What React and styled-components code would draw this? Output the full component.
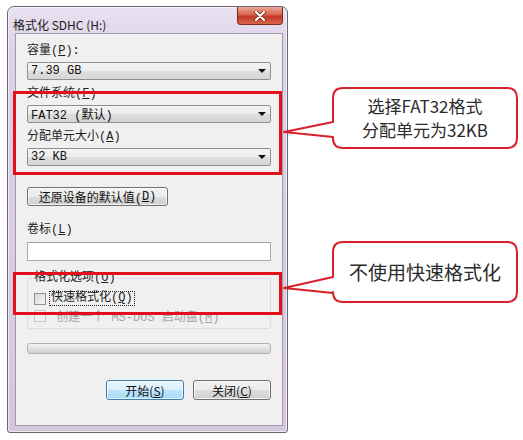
import React from "react";
import styled, { createGlobalStyle } from "styled-components";

const GlobalStyle = createGlobalStyle`
  body {
    margin: 0;
    background: #fff;
    font-family: "Liberation Mono", "Noto Sans CJK SC", monospace;
  }
`;

const Stage = styled.div`
  position: relative;
  width: 523px;
  height: 440px;
  overflow: hidden;
`;

const Win = styled.div`
  margin: 6px 0 0 7px;
  width: 281px;
  height: 427px;
  box-sizing: border-box;
  border: 1px solid #6e6577;
  border-radius: 7px 7px 3px 3px;
  background: linear-gradient(180deg, #e9e2f1 0%, #dcd2e6 10%, #d3c8dc 100%);
  box-shadow: inset 0 0 0 1px rgba(255, 255, 255, 0.55);
  padding: 0 4px 6px 7px;
  display: flex;
  flex-direction: column;
`;

const TitleBar = styled.div`
  height: 26px;
  display: flex;
  justify-content: space-between;
  align-items: flex-start;
`;

const Title = styled.div`
  padding-top: 11px;
  margin-left: -2px;
  font-family: "Noto Sans CJK SC", sans-serif;
  font-size: 12px;
  line-height: 14px;
  color: #1a1a1a;
`;

const CloseBox = styled.div`
  width: 46px;
  height: 18px;
  box-sizing: border-box;
  border: 1px solid #7b2a22;
  border-top: none;
  border-radius: 0 0 4px 4px;
  background: linear-gradient(180deg, #eaa897 0%, #d86450 45%, #c23a24 55%, #d8634b 100%);
  display: flex;
  align-items: center;
  justify-content: center;
`;

const Client = styled.div`
  flex: 1;
  background: #f0f0f0;
  border: 1px solid #a198ab;
  padding: 0 11px;
  display: flex;
  flex-direction: column;
`;

const Label = styled.div`
  margin-top: ${(p) => p.$top}px;
  height: 14px;
  font-size: 12px;
  line-height: 14px;
  color: #1e1e1e;
  white-space: nowrap;
`;

const Select = styled.div`
  margin-top: 4px;
  height: 18px;
  box-sizing: border-box;
  border: 1px solid #8e8f8f;
  border-radius: 2px;
  background: linear-gradient(180deg, #f4f4f4 0%, #ececec 50%, #dedede 51%, #d6d6d6 100%);
  display: flex;
  align-items: center;
  justify-content: space-between;
  padding: 0 4px 0 3px;
  font-size: 12px;
  color: #111;
  white-space: nowrap;
`;

const Arrow = styled.span`
  width: 0;
  height: 0;
  border-left: 4px solid transparent;
  border-right: 4px solid transparent;
  border-top: 4px solid #111;
`;

const PushButton = styled.div`
  height: ${(p) => p.$h || 20}px;
  width: ${(p) => p.$w}px;
  margin-top: ${(p) => p.$top || 0}px;
  box-sizing: border-box;
  border: 1px solid ${(p) => (p.$primary ? "#3c7fb1" : "#707070")};
  border-radius: 3px;
  background: ${(p) =>
    p.$primary
      ? "linear-gradient(180deg, #eaf6fd 0%, #d9f0fc 50%, #bee6fd 51%, #a7d9f5 100%)"
      : "linear-gradient(180deg, #f2f2f2 0%, #ebebeb 50%, #dddddd 51%, #cfcfcf 100%)"};
  box-shadow: inset 0 0 0 1px rgba(255, 255, 255, 0.7);
  display: flex;
  align-items: center;
  justify-content: center;
  font-family: ${(p) => (p.$ui ? '"Noto Sans CJK SC", sans-serif' : "inherit")};
  font-size: 12px;
  color: #111;
  white-space: nowrap;
`;

const TextBox = styled.div`
  margin-top: 5px;
  height: 19px;
  box-sizing: border-box;
  border: 1px solid #abadb3;
  border-top-color: #9ea0a6;
  background: #fff;
`;

const Group = styled.fieldset`
  margin: 10px 0 0;
  height: 58px;
  box-sizing: border-box;
  border: 1px solid #d5dfe5;
  border-radius: 3px;
  padding: 7px 6px 0;
  display: flex;
  flex-direction: column;
  gap: 4px;
`;

const Legend = styled.legend`
  padding: 0 1px;
  margin-left: -1px;
  font-size: 12px;
  line-height: 14px;
  color: #1e1e1e;
`;

const CheckRow = styled.div`
  display: flex;
  align-items: center;
  gap: 3px;
  height: 13px;
  font-size: 12px;
  color: ${(p) => (p.$disabled ? "#a3a3a3" : "#1e1e1e")};
  white-space: nowrap;
`;

const Box = styled.span`
  width: 12px;
  height: 12px;
  box-sizing: border-box;
  border: 1px solid ${(p) => (p.$disabled ? "#c9c9c9" : "#8e8f8f")};
  background: ${(p) =>
    p.$disabled ? "#f4f4f4" : "linear-gradient(135deg, #d8d8d8 0%, #f6f6f6 100%)"};
`;

const Focus = styled.span`
  border: 1px dotted #222;
  padding: 0 1px;
  line-height: 13px;
`;

const Progress = styled.div`
  margin-top: 14px;
  height: 11px;
  box-sizing: border-box;
  border: 1px solid #b2b2b2;
  border-radius: 3px;
  background: linear-gradient(180deg, #f3f3f3 0%, #e2e2e2 50%, #d0d0d0 100%);
`;

const Buttons = styled.div`
  margin-top: 26px;
  display: flex;
  justify-content: flex-end;
  gap: 9px;
`;

/* annotations drawn over the screenshot */
const RedFrame = styled.div`
  position: absolute;
  left: 13px;
  top: ${(p) => p.$top}px;
  width: 269px;
  height: ${(p) => p.$h}px;
  box-sizing: border-box;
  border: 3px solid #e2101a;
`;

const Callout = styled.div`
  position: absolute;
  left: 283px;
  top: ${(p) => p.$top}px;
  width: 236px;
  height: 64px;
  display: flex;
`;

const CalloutShape = styled.svg`
  position: absolute;
  inset: 0;
`;

const CalloutText = styled.div`
  position: relative;
  margin: 2px 0 0 50px;
  width: 184px;
  height: 60px;
  display: flex;
  flex-direction: column;
  align-items: center;
  justify-content: center;
  font-family: "Noto Sans CJK SC", sans-serif;
  font-size: ${(p) => p.$size}px;
  line-height: ${(p) => p.$size + 7}px;
  color: #2b2b2b;
`;

const bubblePath = (tip, j1, j2) =>
  `M60,2 H224 Q234,2 234,12 V52 Q234,62 224,62 H60 Q50,62 50,52 V${j2} L1,${tip} L50,${j1} V12 Q50,2 60,2 Z`;

const Bubble = ({ top, tip, j1, j2, size, children }) => (
  <Callout $top={top}>
    <CalloutShape width="236" height="64" viewBox="0 0 236 64">
      <path d={bubblePath(tip, j1, j2)} fill="#fff" stroke="#d8202a" strokeWidth="2" strokeLinejoin="round" />
    </CalloutShape>
    <CalloutText $size={size}>{children}</CalloutText>
  </Callout>
);

export default function App() {
  return (
    <Stage>
      <GlobalStyle />
      <Win>
        <TitleBar>
          <Title>格式化 SDHC (H:)</Title>
          <CloseBox>
            <svg width="12" height="10" viewBox="0 0 12 10">
              <path d="M2,1 L10,9 M10,1 L2,9" stroke="#5a1a12" strokeWidth="3.4" strokeLinecap="round" />
              <path d="M2,1 L10,9 M10,1 L2,9" stroke="#fff" strokeWidth="2.2" strokeLinecap="round" />
            </svg>
          </CloseBox>
        </TitleBar>
        <Client>
          <Label $top={10}>容量(<u>P</u>):</Label>
          <Select>7.39 GB<Arrow /></Select>
          <Label $top={7}>文件系统(<u>F</u>)</Label>
          <Select>FAT32 (默认)<Arrow /></Select>
          <Label $top={7}>分配单元大小(<u>A</u>)</Label>
          <Select>32 KB<Arrow /></Select>
          <PushButton $w={141} $h={19} $top={21}>还原设备的默认值(<u>D</u>)</PushButton>
          <Label $top={17}>卷标(<u>L</u>)</Label>
          <TextBox />
          <Group>
            <Legend>格式化选项(<u>O</u>)</Legend>
            <CheckRow>
              <Box />
              <Focus>快速格式化(<u>Q</u>)</Focus>
            </CheckRow>
            <CheckRow $disabled>
              <Box $disabled />
              <span>&nbsp;创建一个 MS-DOS 启动盘(<u>M</u>)</span>
            </CheckRow>
          </Group>
          <Progress />
          <Buttons>
            <PushButton $w={78} $primary $ui>开始(<u>S</u>)</PushButton>
            <PushButton $w={78} $ui>关闭(<u>C</u>)</PushButton>
          </Buttons>
        </Client>
      </Win>

      <RedFrame $top={91} $h={84} />
      <RedFrame $top={272} $h={43} />

      <Bubble top={86} tip={46} j1={36} j2={51} size={17}>
        <span>选择FAT32格式</span>
        <span>分配单元为32KB</span>
      </Bubble>
      <Bubble top={240} tip={48} j1={37} j2={53} size={19}>
        <span>不使用快速格式化</span>
      </Bubble>
    </Stage>
  );
}
